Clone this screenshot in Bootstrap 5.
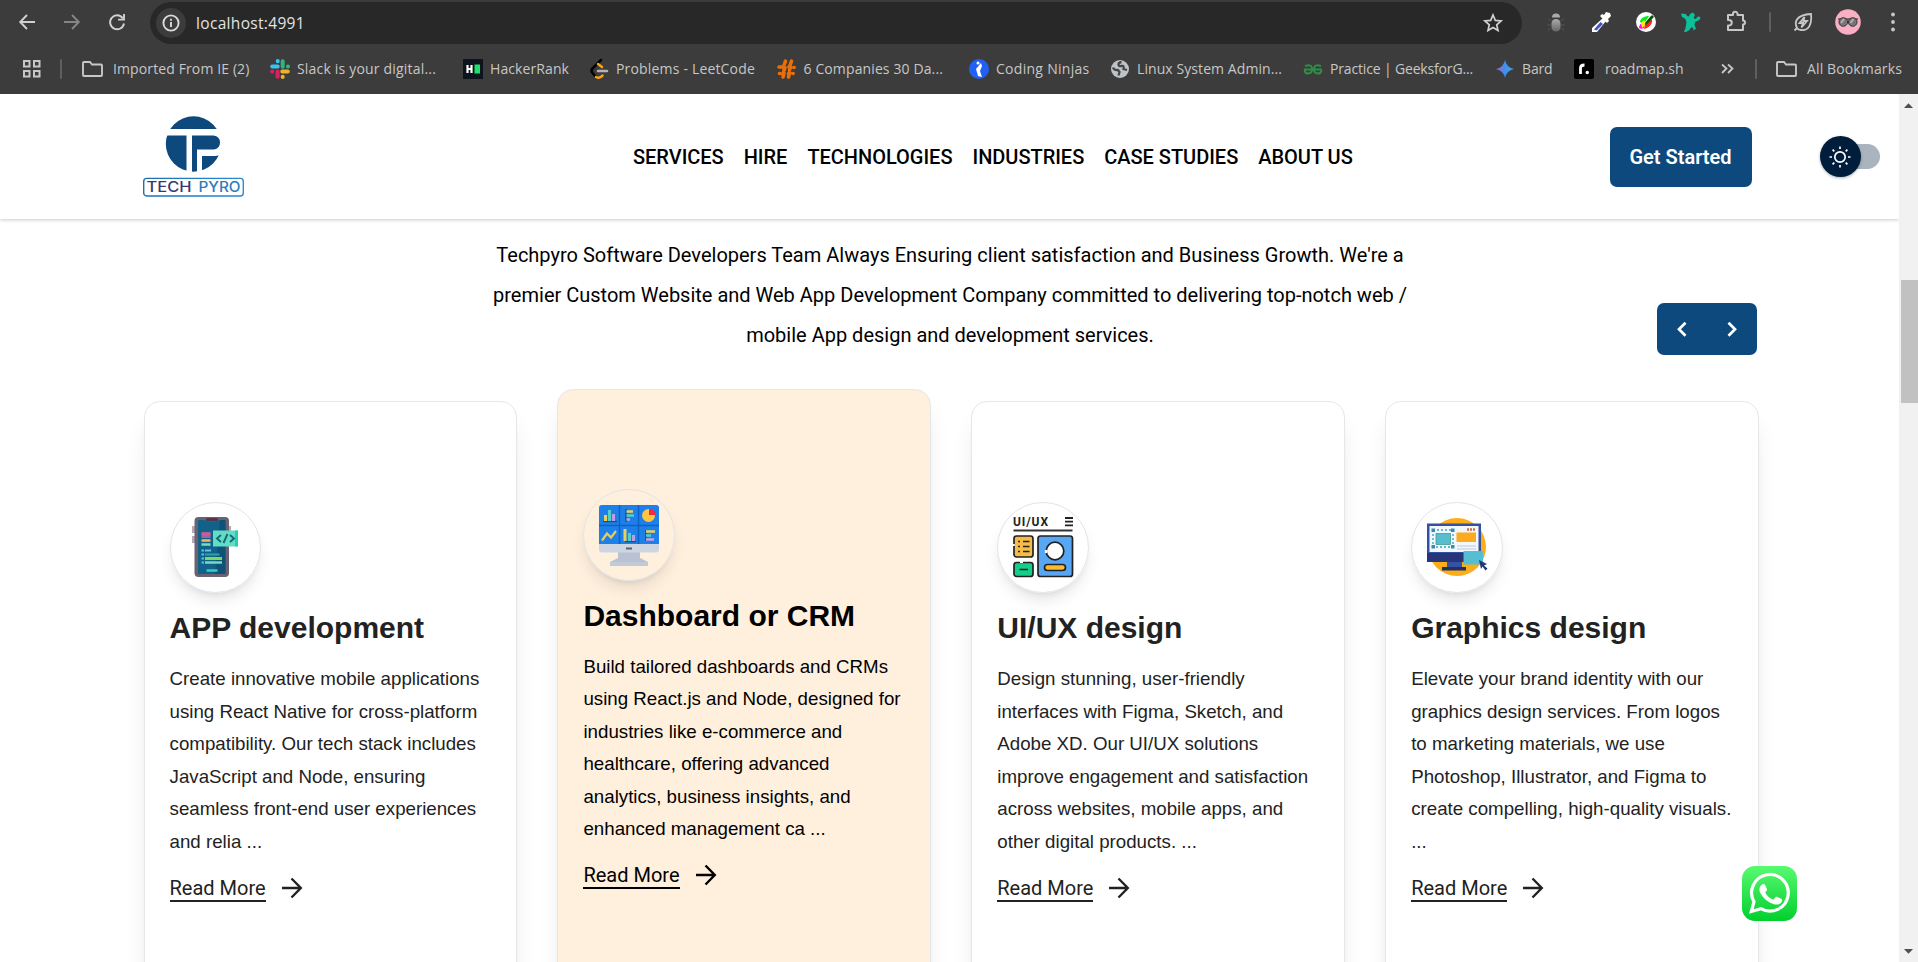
<!DOCTYPE html>
<html lang="en">
<head>
<meta charset="utf-8">
<title>Tech Pyro</title>
<link href="https://cdn.jsdelivr.net/npm/bootstrap@5.3.0/dist/css/bootstrap.min.css" rel="stylesheet">
<style>
  :root { --brand: #0d497c; --line: #e5e7eb; }
  body { height: 962px; overflow: hidden; background: #fff; font-family: Roboto, sans-serif; color: #000; }
  svg { display: block; flex: none; overflow: visible; }

  /* browser chrome */
  .chrome { height: 94px; background: #3c3c3c; color: #c7c7c7; font-family: "Open Sans", "Noto Sans", sans-serif; }
  .toolbar { height: 44px; display: grid; grid-template-columns: 45px 45px 45px 10.5px 1372px 11px repeat(5, 45px) 23px 44px 45px 45px; padding-left: 4.5px; align-items: center; justify-items: center; }
  .omnibox { width: 1372px; height: 42px; margin-top: 1px; border-radius: 21px; background: #282828; grid-column: 5; padding-left: 6px; padding-right: 19px; }
  .info-dot { width: 30px; height: 30px; border-radius: 50%; background: #3c3c3c; }
  .url { font-size: 15.5px; color: #e3e3e3; margin-left: 10px; line-height: 20px; }
  .bookmarks { height: 50px; display: grid; padding-left: 22px; align-items: center;
    grid-template-columns: 38px 22px 188px 193px 126px 187.5px 192.5px 141px 193px 192px 79px 147px 34px 21px auto; }
  .bm { display: flex; align-items: center; gap: 7px; font-size: 14px; white-space: nowrap; line-height: 20px; padding-bottom: 1px; }
  .bm svg { width: 20px; height: 20px; }
  .divider { width: 2px; height: 20px; background: #5f5f5f; border-radius: 1px; }

  /* site header */
  .site { width: 1899px; height: 868px; position: relative; overflow: hidden; }
  .site-head { height: 125px; padding-left: 143px; box-shadow: 0 1px 3px rgba(0,0,0,.14), 0 1px 5px rgba(0,0,0,.07); position: relative; z-index: 2; background: #fff; }
  .brand-logo { width: 101px; }
  .site-nav { margin-left: 389px; gap: 20px; font-size: 20px; font-weight: 500; letter-spacing: -.02px; white-space: nowrap; flex: 1; }
  .cta { width: 142px; height: 60px; border-radius: 7px; background: var(--brand); color: #fff; font-weight: 600; font-size: 20px; border: 0; padding: 0; }
  .theme { margin: 0 18.5px 0 68px; }
  .theme-thumb { width: 41px; height: 41px; border-radius: 50%; background: #001e3c; box-shadow: 0 1px 3px rgba(0,0,0,.3); }
  .theme-track { background: #aab4be; width: 50px; height: 25px; border-radius: 13px; margin: 0 1px 0 -31px; }

  /* services */
  .lead-in { font-size: 20px; line-height: 40px; padding: 16px 0 0 1px; margin: 0; text-align: center; }
  .pager { width: 100px; height: 52px; border-radius: 7px; background: var(--brand); margin: -52px 142px 0 auto; }
  .deck { width: 1655.500px; margin-left: 123.300px; margin-top: 46px; --bs-gutter-x: 40.500px; }
  .service { height: 620px; border: 1px solid var(--line); border-radius: 16px; background: #fff; padding: 99.500px 0 0 25px; color: #222;
    box-shadow: 0 20px 25px -5px rgba(0,0,0,.1), 0 8px 10px -6px rgba(0,0,0,.1); font-family: "Liberation Sans", Arial, sans-serif; white-space: nowrap; }
  .service.featured { background: #fff0de; color: #000; margin-top: -12.500px; }
  .service-icon { width: 91.5px; height: 91.5px; border: 1px solid #e0e3ea; border-radius: 50%; box-shadow: 0 10px 15px -3px rgba(0,0,0,.1), 0 4px 6px -4px rgba(0,0,0,.1); padding: 14.7px; }
  .service h2 { font-size: 30px; font-weight: 700; line-height: 36px; margin: 17px 0 17px; }
  .service p { font-size: 18.72px; line-height: 32.6px; margin: 0 0 17px; }
  .more { font-family: Roboto, sans-serif; font-size: 20px; line-height: 24px; }
  .more span { border-bottom: 2px solid currentColor; }
  .whatsapp { position: absolute; left: 1741.500px; top: 771.500px; z-index: 3; }

  /* scrollbar */
  .scroller { width: 19px; height: 868px; background: #f1f1f1; padding: 9px 0 8px 2px; }
  .scroll-thumb { height: 123px; margin-top: 172px; background: #c1c1c1; }
</style>
</head>
<body>
<header class="chrome">
  <div class="toolbar">
    <svg width="16" height="16" fill="none" stroke="#d0d0d0" stroke-width="1.9"><path d="M16 8H1.5M8 1 1.2 8 8 15"/></svg>
    <svg width="16" height="16" fill="none" stroke="#858585" stroke-width="1.9"><path d="M0 8h14.5M8 1l6.8 7L8 15"/></svg>
    <svg width="16" height="16" fill="none" stroke="#d0d0d0" stroke-width="1.9"><path d="M13.8 4.2A7 7 0 1 0 15 9.5M15 0v5.6H9"/></svg>
    <div class="omnibox d-flex align-items-center">
      <div class="info-dot d-flex align-items-center justify-content-center"><svg width="18" height="18" fill="none" stroke="#dadada" stroke-width="1.9"><circle cx="9" cy="9" r="7.6"/><path d="M9 8v5M9 4.8v2"/></svg></div>
      <span class="url" data-w="109">localhost:4991</span>
      <svg class="ms-auto" width="20" height="20" fill="none" stroke="#d0d0d0" stroke-width="1.7"><path d="m10 2 2.3 5.4 5.8.5-4.4 3.9 1.3 5.7-5-3-5 3 1.3-5.7L1.9 7.900l5.8-.5z"/></svg>
    </div>
    <svg style="grid-column:7" width="18" height="20" viewBox="0 0 18 20"><defs><linearGradient id="bug" x2="0" y2="1"><stop stop-color="#aaa"/><stop offset="1" stop-color="#666"/></linearGradient></defs><path d="M5 5.500a4 4 0 0 1 8 0z" fill="#aaa"/><rect x="4.500" y="7" width="9" height="12.500" rx="4.500" fill="url(#bug)"/><path d="M1 7l3 2M0 13h4M1 18l3-2M17 7l-3 2M18 13h-4M17 18l-3-2" stroke="#555"/></svg>
    <svg width="20" height="22" viewBox="0 0 20 22"><path d="m12 7 3 3-9 11H1v-4z" fill="#fff"/><path d="m9.500 11 2.500 2-6.500 6.500-2.500-1z" fill="#3d55c8"/><path d="m9 5 2-2 2 1 2-3 4 1 1 3-3 3 1 2-2 2z" fill="#fff"/></svg>
    <svg width="20" height="20" viewBox="0 0 20 20"><circle cx="10" cy="10" r="10" fill="#fff"/><path d="M4 10C4 6 9 4 13 4L8 12z" fill="#0e2"/><path d="M3 16c0-3 2-5 4-6l1 6c-2 1-4 1-5 0" fill="#f0f"/><path d="m5 11 3-3 2 4-4 4z" fill="#fe0"/><path d="M9 12c4-3 6-4 7-5 1 5-3 9-8 10z" fill="#f22"/><path d="m9 11 5-6 2-2 2 2-3 3-5 5z" fill="#050"/></svg>
    <svg width="20" height="20" viewBox="0 0 20 20" fill="#0bc19a"><path d="M0 1.500 5 2l1 2 2 .5L9 2l3-1.500L14 3l-1.500 3 2 1 2.500-2.500 2.500.5-1 3-4.500 2-.5 3 1.500 3.500-2.500 2-.5-3-2 0-1.500 2.500L5 20H3l1.500-4 1-6L4 6.500 1 5z"/></svg>
    <svg width="22" height="22" fill="none" stroke="#c7c7c7" stroke-width="2"><path d="M3 4h5V3a2 2 0 0 1 4.500 0v1H18v5.500a2 2 0 0 1 0 4V19H3v-4.500h1a2.300 2.300 0 0 0 0-5.500H3z" stroke-linejoin="round"/></svg>
    <i class="divider"></i>
    <svg width="20" height="20" fill="none" stroke="#c7c7c7" stroke-width="1.800"><path d="M1.500 18.500 4 16c-3-6-1-13 14-14 1 10-2 17-10 16-2 0-3-.5-4-2M11.500 5 6.500 11h3.500l-1.500 4.500 5.500-6.500h-3.500z"/></svg>
    <svg width="26" height="26"><circle cx="13" cy="13" r="12.800" fill="#f8afc4"/><path d="M3 10h20" stroke="#555" stroke-width="1.500"/><circle cx="8.300" cy="13" r="4.300" fill="#777" stroke="#333"/><circle cx="17.700" cy="13" r="4.300" fill="#777" stroke="#333"/><path d="m6 14 3-4M15.500 14l3-4" stroke="#bbb" stroke-width="1.500"/></svg>
    <svg width="4" height="20" fill="#c7c7c7"><circle cx="2" cy="2.500" r="1.900"/><circle cx="2" cy="10" r="1.900"/><circle cx="2" cy="17.500" r="1.900"/></svg>
  </div>
  <nav class="bookmarks">
    <svg width="19" height="19" fill="none" stroke="#c7c7c7" stroke-width="2"><path d="M2 1h5.500v5.500H2zM12 1h5.500v5.500H12zM2 11h5.500v5.500H2zM12 11h5.500v5.500H12z"/></svg>
    <i class="divider"></i>
    <div class="bm"><svg class="me-1" fill="none" stroke="#c7c7c7" stroke-width="1.900"><path d="M2 3h6l2 2.500h9a1 1 0 0 1 1 1V16a1 1 0 0 1-1 1H2a1 1 0 0 1-1-1V4a1 1 0 0 1 1-1z"/></svg><span data-w="136.500">Imported From IE (2)</span></div>
    <div class="bm"><svg viewBox="0 0 20 20" stroke-width="4" stroke-linecap="round"><path d="M2.200 7.500h5.500M7.700 2.100v.2" stroke="#36c5f0"/><path d="M12.700 2.200v5.500M17.900 7.400h.1" stroke="#2eb67d"/><path d="M12.300 12.500h5.500M12.700 17.800v.1" stroke="#ecb22e"/><path d="M7.600 12.500v5.300M2.200 12.500h.1" stroke="#e01e5a"/></svg><span data-w="139">Slack is your digital...</span></div>
    <div class="bm"><svg><path d="M0 0h20v20H0z" fill="#0e141e"/><path d="M4.500 6v8M8.500 6v8M4 10h5" stroke="#fff" stroke-width="2.200"/><path d="M11.500 5.500H17v9h-5.500z" fill="#1ee06a"/></svg><span data-w="79">HackerRank</span></div>
    <div class="bm"><svg fill="none" stroke-width="2.500" stroke-linecap="round"><path d="M12 1 3.500 9.500q-2 2 0 4.500l3 3.500" stroke="#000"/><path d="m9 5 4 3M7 18q4 2 6.500-1.500" stroke="#ffa116"/><path d="M9 12h9" stroke="#b3b3b3"/></svg><span data-w="139">Problems - LeetCode</span></div>
    <div class="bm"><svg fill="none" stroke="#e8700c" stroke-linecap="round"><path d="M8.500 2.200 7.500 5M14.500 2.200 13.500 5M2 8h2.500M8 8.500l-1 3M13.500 7.500 12.500 11M17 8.500h.2M2.500 14.500h.2M7 14 6 18M12.500 14l-1 4M16 14.500h.2" stroke-width="3.600"/><path d="M7.500 4 5 8l2 3-2.500 4M13.500 4 11 8l2 3-2.500 4M4 8l3 .5M12 10l5-2M3 14.500l4-1M12 13.500l4 1" stroke-width="1.800"/></svg><span data-w="139.500">6 Companies 30 Da...</span></div>
    <div class="bm"><svg><circle cx="10" cy="10" r="10" fill="#2060f6"/><circle cx="9" cy="4" r="1.500" fill="#fff"/><path d="M12 4 7 10l2 7 4 1-2-6 2-5z" fill="#fff"/></svg><span data-w="93.500">Coding Ninjas</span></div>
    <div class="bm"><svg><circle cx="10" cy="10" r="9" fill="#bec3c8"/><path d="M3 8.500q1 3 5 2.500l1.500 2-1 3.500M11.500 3q-3 .5-3 2.500t3 1.500 2 3l3.500 1" fill="none" stroke="#454648" stroke-width="2.300"/></svg><span data-w="145">Linux System Admin...</span></div>
    <div class="bm"><svg fill="none" stroke="#2f8d46" stroke-width="2"><path d="M1 10.500h18M2 7.200c5-2.500 7.500 0 7 4s-6.500 5-7.500 0M18 7.200c-5-2.500-7.500 0-7 4s6.500 5 7.500 0"/></svg><span data-w="143">Practice | GeeksforG...</span></div>
    <div class="bm"><svg><defs><linearGradient id="bd" x2="1"><stop stop-color="#b267bb"/><stop offset=".45" stop-color="#458af0"/><stop offset="1" stop-color="#32aee0"/></linearGradient></defs><path d="M10 1q1.500 7.500 9 9-7.500 1.500-9 9-1.500-7.500-9-9 7.500-1.500 9-9" fill="url(#bd)"/></svg><span data-w="30.500">Bard</span></div>
    <div class="bm"><svg class="me-1"><rect width="20" height="20" rx="2" fill="#000"/><path d="M6.500 15V9q0-3 4-3" stroke="#fff" stroke-width="2.800" fill="none"/><circle cx="13.300" cy="13.500" r="1.700" fill="#fff"/></svg><span data-w="78.500">roadmap.sh</span></div>
    <svg width="13" height="12" fill="none" stroke="#c7c7c7" stroke-width="1.800"><path d="m1 1.500 4.500 4L1 10M7 1.500l4.500 4L7 10"/></svg>
    <i class="divider"></i>
    <div class="bm"><svg class="me-1" fill="none" stroke="#c7c7c7" stroke-width="1.900"><path d="M2 3h6l2 2.500h9a1 1 0 0 1 1 1V16a1 1 0 0 1-1 1H2a1 1 0 0 1-1-1V4a1 1 0 0 1 1-1z"/></svg><span data-w="95">All Bookmarks</span></div>
  </nav>
</header>

<div class="d-flex">
<main class="site">
  <div class="site-head d-flex align-items-center">
    <svg class="brand-logo" width="101" height="82" viewBox="0 0 101 82">
      <defs><clipPath id="disc"><circle cx="50.500" cy="28" r="27.700"/></clipPath><linearGradient id="bl"><stop stop-color="#1c70b4"/><stop offset="1" stop-color="#2a8bd0"/></linearGradient></defs>
      <g clip-path="url(#disc)" fill="#0d497c"><path d="M0 0h101v13H0zM0 19.500h43.500V56H0zM49 19.500h21.500q6.500 1 6.500 7t-6 7H54V56h-5zM59 40h13q4 0 8-3V56H59z"/></g>
      <rect x=".7" y="62.400" width="99.600" height="17.600" rx="3" fill="none" stroke="url(#bl)" stroke-width="1.400"/>
      <text x="3.500" y="76" font-family="Inter, sans-serif" font-size="13.800" font-weight="500" fill="#3b3870" textLength="45" lengthAdjust="spacingAndGlyphs">TECH</text>
      <text x="55.500" y="76" font-family="Inter, sans-serif" font-size="13.800" font-weight="500" fill="#2b7cbc" textLength="42" lengthAdjust="spacingAndGlyphs">PYRO</text>
    </svg>
    <nav class="site-nav d-flex"><span>SERVICES</span><span>HIRE</span><span>TECHNOLOGIES</span><span>INDUSTRIES</span><span>CASE STUDIES</span><span>ABOUT US</span></nav>
    <button class="cta">Get Started</button>
    <div class="theme d-flex align-items-center">
      <div class="theme-thumb d-flex align-items-center justify-content-center position-relative z-1"><svg width="22" height="22" fill="none" stroke="#fff" stroke-width="1.700"><circle cx="11" cy="11" r="5.200"/><path d="M11 .5V3M11 19v2.500M.5 11H3M19 11h2.500M3.600 3.600l1.700 1.700M16.700 16.700l1.700 1.700M3.600 18.400l1.700-1.700M16.700 5.300l1.700-1.700"/></svg></div>
      <div class="theme-track"></div>
    </div>
  </div>

  <p class="lead-in">Techpyro Software Developers Team Always Ensuring client satisfaction and Business Growth. We're a<br>premier Custom Website and Web App Development Company committed to delivering top-notch web /<br>mobile App design and development services.</p>
  <div class="pager d-flex align-items-center justify-content-around"><svg width="10" height="16" fill="none" stroke="#fff" stroke-width="2.700"><path d="M8.500 1.800 2 8.300l6.500 6.500"/></svg><svg width="10" height="16" fill="none" stroke="#fff" stroke-width="2.700"><path d="M1.500 1.800 8 8.300l-6.500 6.500"/></svg></div>

  <div class="row deck">
    <div class="col-3"><article class="service">
      <div class="service-icon"><svg width="60" height="60" viewBox="0 0 60 60"><path d="M7 9h5v7H7zM7 19h5v7H7zM41 9h5v7h-5z" fill="#b5aab5"/><rect x="9.500" width="34.500" height="60" rx="4" fill="#6a6271"/><path d="M13 3h7l2 2h10l2-2h6.500v54H13z" fill="#12618a"/><path d="M35 3h5.500v54H30z" fill="#0e5278"/><rect x="21" y="1" width="12" height="3.500" rx="1.500" fill="#54364c"/><path d="M16.500 15h9v6h-9z" fill="#a4629f"/><path d="M16.500 17.500h9" stroke="#d85c9a" stroke-width="1.500"/><path d="M16.500 23.500h9" stroke="#f3b85c" stroke-width="2.500"/><path d="M16.500 27.500h9" stroke="#77dcc0" stroke-width="2.500"/><path d="M16.500 33.500H19M16.500 37.500H19M16.500 41.500H19M16.500 45.500H19" stroke="#50c8d8" stroke-width="2"/><path d="M20 33.500h6" stroke="#72b8e8" stroke-width="2"/><path d="M20 37.500h14.500" stroke="#26a8a8" stroke-width="2"/><path d="M20 41.500h17" stroke="#80d664" stroke-width="3"/><path d="M20 45.500h17" stroke="#78dabb" stroke-width="2.500"/><path d="M21.500 53.500h11" stroke="#3fc9c0" stroke-width="2.500"/><path d="M28 13.500h25v16H28z" fill="#60dec4"/><path d="M50 13.500h3v16h-3z" fill="#28cfae"/><path d="m36 18-4 3.500 4 3.500M45 18l4 3.500-4 3.500M42.500 17l-4 9" fill="none" stroke="#176879" stroke-width="1.900"/></svg></div>
      <h2>APP development</h2>
      <p>Create innovative mobile applications<br>using React Native for cross-platform<br>compatibility. Our tech stack includes<br>JavaScript and Node, ensuring<br>seamless front-end user experiences<br>and relia ...</p>
      <a class="more d-flex text-reset text-decoration-none"><span>Read More</span><svg class="ms-3" width="20" height="24" fill="none" stroke="currentColor" stroke-width="2.400"><path d="M0 12h18.500M9.500 2.500l9.300 9.500-9.300 9.500"/></svg></a>
    </article></div>
    <div class="col-3"><article class="service featured">
      <div class="service-icon"><svg width="60" height="60" viewBox="0 0 60 60"><path d="M19 47h22v6l8 4v4H11v-4l8-4z" fill="#b9c2d2"/><path d="M11 57h38v4H11z" fill="#c2cad8"/><rect width="60" height="47.500" rx="3" fill="#cdd5e3"/><path d="M0 39V3q0-3 3-3h54q3 0 3 3v36z" fill="#1d80ea"/><path d="M20.500 0v39M39.500 0v39M0 20.500h60" stroke="#0d61c4" stroke-width="1.500"/><path d="M4 16.500h14M27 4v13M26 36.500h11M47 25v11" stroke="#174f86" stroke-width="1.500"/><path d="M6.500 10v6M26 24v12" stroke="#ecd05b" stroke-width="3"/><path d="M10.500 5v11M30.500 28v8" stroke="#4ed1c9" stroke-width="3"/><path d="M14.500 9v7M34.500 30v6" stroke="#c29be8" stroke-width="3"/><path d="M27.500 6.500H34M47 26.500h9" stroke="#ecd05b" stroke-width="2.500"/><path d="M27.500 10.500H35M47 30.500h5" stroke="#4ed1c9" stroke-width="2.500"/><path d="M27.500 14.500H31M47 34.500h8" stroke="#d39ce0" stroke-width="2.500"/><circle cx="49.500" cy="10.500" r="6.500" fill="#ffc53d"/><path d="M50 10V3.500a6.500 6.500 0 0 1 6.500 6.500z" fill="#f32940"/><path d="m3 35.500 5-7 4 4 5-6.500" fill="none" stroke="#e3cd61" stroke-width="2.200"/><path d="M27 43.500h6" stroke="#59606d" stroke-width="2"/></svg></div>
      <h2>Dashboard or CRM</h2>
      <p>Build tailored dashboards and CRMs<br>using React.js and Node, designed for<br>industries like e-commerce and<br>healthcare, offering advanced<br>analytics, business insights, and<br>enhanced management ca ...</p>
      <a class="more d-flex text-reset text-decoration-none"><span>Read More</span><svg class="ms-3" width="20" height="24" fill="none" stroke="currentColor" stroke-width="2.400"><path d="M0 12h18.500M9.500 2.500l9.300 9.500-9.300 9.500"/></svg></a>
    </article></div>
    <div class="col-3"><article class="service">
      <div class="service-icon"><svg width="60" height="60" viewBox="0 0 60 60"><text x="0" y="9" font-family="Roboto, sans-serif" font-weight="700" font-size="12" fill="#222" textLength="35">UI/UX</text><path d="M52 1h8M52 4.700h8M52 8.400h8" stroke="#222" stroke-width="1.800"/><path d="M.5 13.500h59" stroke="#333" stroke-width="2"/><g stroke="#222" stroke-width="1.700"><rect x="1" y="19" width="19" height="21" rx="2.500" fill="#f5bd48"/><rect x="1" y="45.500" width="19" height="14" rx="2.500" fill="#13cd88"/><rect x="25" y="19" width="34.500" height="40.500" rx="2.500" fill="#58a7f5"/><circle cx="42" cy="34" r="8.800" fill="#fff"/><rect x="31.500" y="47.500" width="21" height="6" rx="3" fill="#f8ba37"/><path d="M5 24.500h2M10 24.500h6.500M5 29.500h2M10 29.500h6.500M5 34.500h2M10 34.500h6.500M6.500 52.500H15"/></g><path d="M0 28h1.800M7 45h3M33 33v3" stroke="#fff" stroke-width="2.200"/></svg></div>
      <h2>UI/UX design</h2>
      <p>Design stunning, user-friendly<br>interfaces with Figma, Sketch, and<br>Adobe XD. Our UI/UX solutions<br>improve engagement and satisfaction<br>across websites, mobile apps, and<br>other digital products. ...</p>
      <a class="more d-flex text-reset text-decoration-none"><span>Read More</span><svg class="ms-3" width="20" height="24" fill="none" stroke="currentColor" stroke-width="2.400"><path d="M0 12h18.500M9.500 2.500l9.300 9.500-9.300 9.500"/></svg></a>
    </article></div>
    <div class="col-3"><article class="service">
      <div class="service-icon"><svg width="60" height="60" viewBox="0 0 60 60"><circle cx="30" cy="30" r="29" fill="#fcad18"/><path d="M20 43h15v7H20z" fill="#3453a4"/><path d="M15 50h24v3.500H15z" fill="#232e67"/><path d="M0 6.500h54V45H0z" fill="#3451a1"/><path d="M0 36h54v9H0z" fill="#273579"/><path d="M2.500 9h49v26h-49z" fill="#f1f7fb"/><path d="M6 13h20v17H6z" fill="none" stroke="#62b8d9" stroke-width="1.800" stroke-dasharray="2 2"/><path d="M4.500 11.500h3.500V15H4.500zM24 11.500h3.500V15H24zM4.500 28H8v3.500H4.500zM24 28h3.500v3.500H24z" fill="#398ab9"/><path d="M9 16.500h14.500v11H9z" fill="#58bdcc" stroke="#48998f" stroke-width=".8"/><path d="M29.500 15.500H49V25H29.500z" fill="#fbab1d"/><path d="M40 12.500h9" stroke="#d66b4b" stroke-width="2.500" stroke-dasharray="2 1"/><path d="M30 29h19M30 32h19" stroke="#d7e0ef" stroke-width="2"/><path d="M36.500 34H56v13.500H36.500z" fill="#55bed3"/><path d="m52 43 8 4-3 1.500 3.500 3-2 2-3-4L54 52z" fill="#233878"/></svg></div>
      <h2>Graphics design</h2>
      <p>Elevate your brand identity with our<br>graphics design services. From logos<br>to marketing materials, we use<br>Photoshop, Illustrator, and Figma to<br>create compelling, high-quality visuals.<br>...</p>
      <a class="more d-flex text-reset text-decoration-none"><span>Read More</span><svg class="ms-3" width="20" height="24" fill="none" stroke="currentColor" stroke-width="2.400"><path d="M0 12h18.500M9.500 2.500l9.300 9.500-9.300 9.500"/></svg></a>
    </article></div>
  </div>

  <a class="whatsapp"><svg width="55" height="55" viewBox="0 0 55 55"><defs><linearGradient id="wa" x2="0" y2="1"><stop stop-color="#58fa70"/><stop offset="1" stop-color="#02cf2e"/></linearGradient></defs><rect width="55" height="55" rx="13" fill="url(#wa)"/><path d="M9.300 45.500 12 35.800a18.300 18.300 0 1 1 6.900 6.900z" fill="none" stroke="#fff" stroke-width="3.200"/><path d="M20.500 18.300c1-.6 2-.5 2.500.5l2 4.500c.3 1-1 2.200-1.800 3.200 2 3.600 4.600 5.900 8.200 7.300l2.300-2.700c.5-.6 1-.5 1.700-.2l4.300 2.200c.8.4.8 2-.4 3.500-1.600 2-5 2.500-8 1.300-6.500-2.400-10-6-13-11-1.800-3.200-.8-6.900 2.200-8.600z" fill="#fff"/></svg></a>
</main>
<aside class="scroller d-flex flex-column">
  <svg class="ms-1" width="9" height="5" fill="#505050"><path d="M-1 5 3.500.2 8 5z"/></svg>
  <div class="scroll-thumb"></div>
  <svg class="ms-1 mt-auto" width="9" height="5" fill="#505050"><path d="M-1 0 3.500 4.800 8 0z"/></svg>
</aside>
</div>
<script src="https://cdn.jsdelivr.net/npm/bootstrap@5.3.0/dist/js/bootstrap.bundle.min.js"></script>
<script>
  document.querySelectorAll('[data-w]').forEach(function (el) {
    var gap = (parseFloat(el.dataset.w) - el.getBoundingClientRect().width) / el.textContent.length;
    el.style.letterSpacing = gap + 'px';
  });
</script>
</body>
</html>
